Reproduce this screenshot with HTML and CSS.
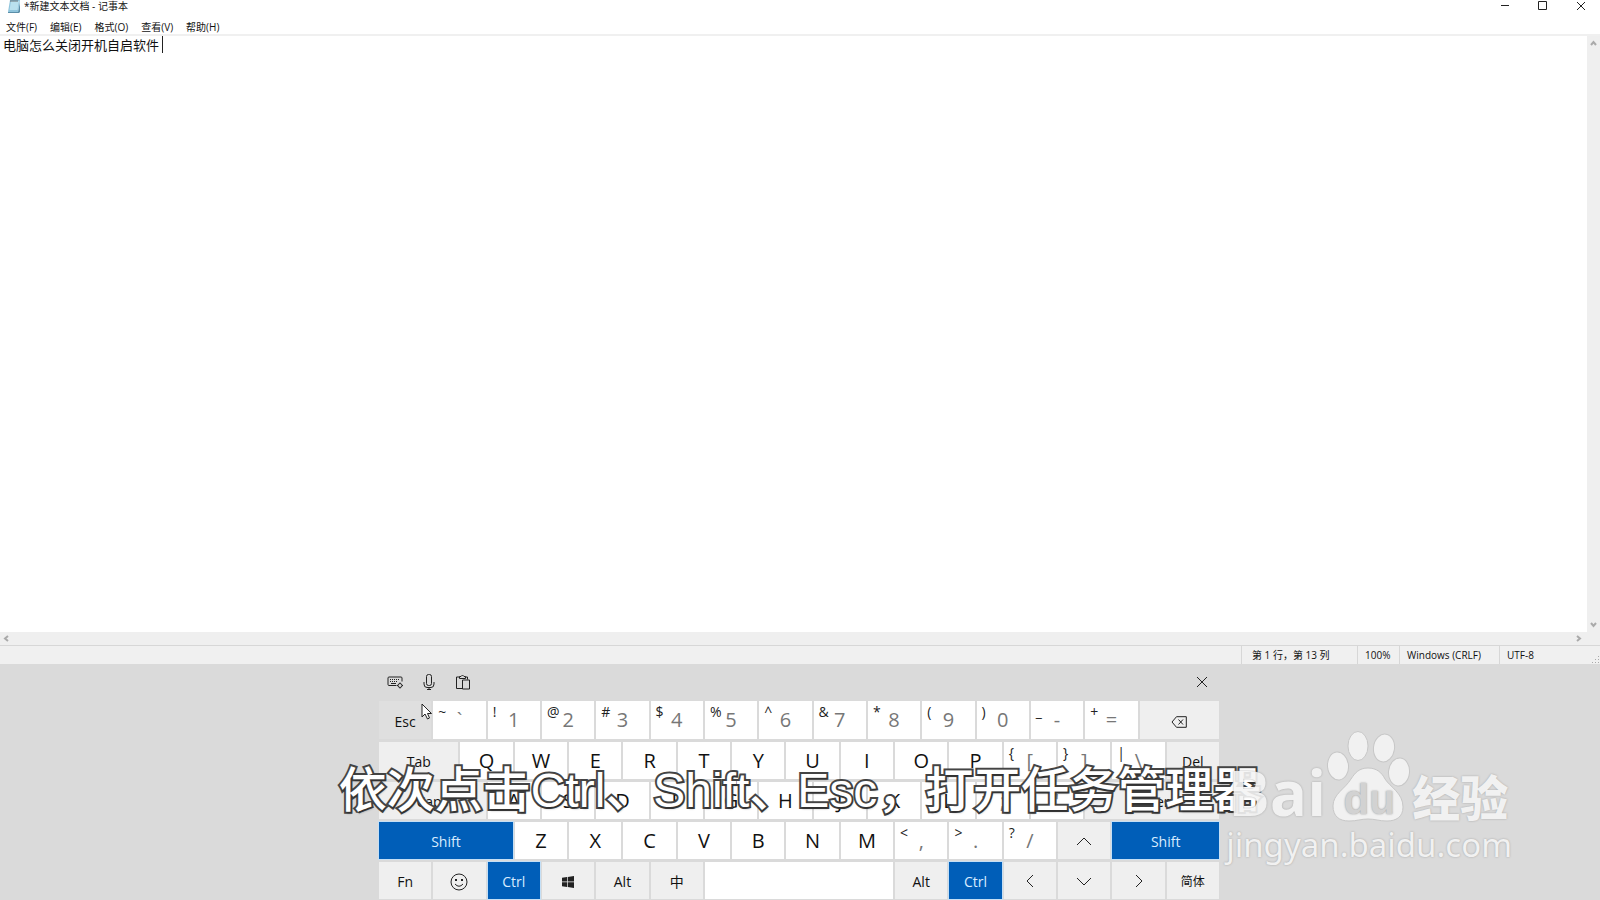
FILE: index.html
```html
<!DOCTYPE html>
<html lang="zh-CN">
<head>
  <meta charset="UTF-8" />
  <meta name="viewport" content="width=device-width, initial-scale=1" />
  <title>*新建文本文档 - 记事本</title>
  <link rel="stylesheet" href="styles.css">
</head>
<body>
  <div class="notepad">
    <header class="titlebar">
      <svg class="app-icon" width="14" height="14" viewBox="0 0 14 14">
        <path d="M3 0H13L11 12H1Z" fill="#8fc4dc" />
        <path d="M4 1H12L10.500 10H2.500Z" fill="#b9e0ee" />
        <path d="M1 12H11L13 2V12L12 13H1Z" fill="#5b8ea8" />
        <path d="M4 0v2M6 0v2M8 0v2M10 0v2" stroke="#555" stroke-width=".8" />
      </svg>
      <span class="title">*新建文本文档 - 记事本</span>
      <div class="win-buttons">
        <button aria-label="最小化"><svg width="10" height="10" viewBox="0 0 10 10"><path d="M1 5.500H9" /></svg></button>
        <button aria-label="最大化"><svg width="10" height="10" viewBox="0 0 10 10"><path d="M.5 1.500H8.500V9.500H.5Z" /></svg></button>
        <button aria-label="关闭"><svg width="10" height="10" viewBox="0 0 10 10"><path d="M1 2L9 10M9 2L1 10" /></svg></button>
      </div>
    </header>

    <nav class="menu">
      <button>文件(F)</button>
      <button>编辑(E)</button>
      <button>格式(O)</button>
      <button>查看(V)</button>
      <button>帮助(H)</button>
    </nav>

    <div class="editor">
      <div class="text-wrap">
        <textarea class="text" aria-label="文本编辑器" spellcheck="false" wrap="off">电脑怎么关闭开机自启软件</textarea>
        <span class="caret"></span>
      </div>
      <div class="scroll-v">
        <button aria-label="向上滚动"><svg width="7" height="7" viewBox="0 0 7 7"><path d="M1 5L3.500 2L6 5" /></svg></button>
        <button aria-label="向下滚动"><svg width="7" height="7" viewBox="0 0 7 7"><path d="M1 2L3.500 5L6 2" /></svg></button>
      </div>
    </div>
    <div class="scroll-h">
      <button aria-label="向左滚动"><svg width="7" height="7" viewBox="0 0 7 7"><path d="M5 1L2 3.500L5 6" /></svg></button>
      <button aria-label="向右滚动"><svg width="7" height="7" viewBox="0 0 7 7"><path d="M2 1L5 3.500L2 6" /></svg></button>
    </div>

    <footer class="status">
      <span class="cell position">第 1 行，第 13 列</span>
      <span class="cell zoom">100%</span>
      <span class="cell eol">Windows (CRLF)</span>
      <span class="cell encoding">UTF-8</span>
      <svg class="grip" width="8" height="8" viewBox="0 0 8 8"><path d="M6 0h1v1h-1zM3 3h1v1h-1zM6 3h1v1h-1zM0 6h1v1h-1zM3 6h1v1h-1zM6 6h1v1h-1z" /></svg>
    </footer>
  </div>

  <div class="touch-panel">
    <div class="keyboard">
      <div class="tools">
        <button aria-label="键盘设置">
          <svg width="16" height="16" viewBox="0 0 16 16"><path d="M9.500 11.500H2Q1 11.500 1 10.500V4Q1 3 2 3H14Q15 3 15 4V7.500M4 9.500H9" /><path d="M3 5.500H13M3 7.500H11" stroke-dasharray="1 1" /><circle cx="13" cy="11.500" r="2" /><path d="M13 8.500v1M13 13.500v1M10 11.500h1M15 11.500h1" /></svg>
        </button>
        <button aria-label="听写">
          <svg width="16" height="16" viewBox="0 0 16 16"><rect x="5.500" y=".5" width="5" height="11" rx="2" /><path d="M3 8V10Q3 13.500 6 13.500H10Q13 13.500 13 10V8M8 13.500V16M6 15.500h4" /></svg>
        </button>
        <button aria-label="剪贴板">
          <svg width="16" height="16" viewBox="0 0 16 16"><path d="M7 14.500H1.500V3H4.500M10.500 3H12.500V5.500M4.500 4.500V2.500H6Q7.500-.5 9 2.500H10.500V4.500Z" /><path d="M7.500 6H14.500V15H7.500Z" /></svg>
        </button>
        <button class="close" aria-label="关闭键盘">
          <svg width="14" height="14" viewBox="0 0 14 14"><path d="M2 2L12 12M12 2L2 12" /></svg>
        </button>
      </div>

      <div class="keys">
        <button class="key fn hover">Esc
          <svg class="pointer" width="12" height="18" viewBox="0 0 12 18"><path d="M1 1V14L4 11L6.500 16L8.500 15L6.500 10.500H10.500Z" /></svg>
        </button>
        <button class="key dual"><sup>~</sup>`</button>
        <button class="key dual"><sup>!</sup>1</button>
        <button class="key dual"><sup>@</sup>2</button>
        <button class="key dual"><sup>#</sup>3</button>
        <button class="key dual"><sup>$</sup>4</button>
        <button class="key dual"><sup>%</sup>5</button>
        <button class="key dual"><sup>^</sup>6</button>
        <button class="key dual"><sup>&amp;</sup>7</button>
        <button class="key dual"><sup>*</sup>8</button>
        <button class="key dual"><sup>(</sup>9</button>
        <button class="key dual"><sup>)</sup>0</button>
        <button class="key dual"><sup>_</sup>-</button>
        <button class="key dual"><sup>+</sup>=</button>
        <button class="key fn w3" aria-label="退格"><svg width="16" height="12" viewBox="0 0 16 12"><path d="M5.500 .7H15.300V11.300H5.500L1 6Z" /><path d="M7.500 3.500L12 8.500M12 3.500L7.500 8.500" /></svg></button>

        <button class="key fn w3">Tab</button>
        <button class="key">Q</button>
        <button class="key">W</button>
        <button class="key">E</button>
        <button class="key">R</button>
        <button class="key">T</button>
        <button class="key">Y</button>
        <button class="key">U</button>
        <button class="key">I</button>
        <button class="key">O</button>
        <button class="key">P</button>
        <button class="key dual"><sup>{</sup>[</button>
        <button class="key dual"><sup>}</sup>]</button>
        <button class="key dual"><sup>|</sup>\</button>
        <button class="key fn">Del</button>

        <button class="key fn w4">Caps</button>
        <button class="key">A</button>
        <button class="key">S</button>
        <button class="key">D</button>
        <button class="key">F</button>
        <button class="key">G</button>
        <button class="key">H</button>
        <button class="key">J</button>
        <button class="key">K</button>
        <button class="key">L</button>
        <button class="key dual"><sup>:</sup>;</button>
        <button class="key dual"><sup>"</sup>'</button>
        <button class="key fn w5">Enter</button>

        <button class="key fn w5 active">Shift</button>
        <button class="key">Z</button>
        <button class="key">X</button>
        <button class="key">C</button>
        <button class="key">V</button>
        <button class="key">B</button>
        <button class="key">N</button>
        <button class="key">M</button>
        <button class="key dual"><sup>&lt;</sup>,</button>
        <button class="key dual"><sup>&gt;</sup>.</button>
        <button class="key dual"><sup>?</sup>/</button>
        <button class="key fn" aria-label="上"><svg width="16" height="16" viewBox="0 0 16 16"><path d="M1 11L8 4L15 11" /></svg></button>
        <button class="key fn w4 active">Shift</button>

        <button class="key fn">Fn</button>
        <button class="key fn" aria-label="表情"><svg width="18" height="18" viewBox="0 0 18 18"><circle cx="9" cy="9" r="8" /><path d="M5 11Q9 15.500 13 11" /><path class="solid" d="M5 6h2v2h-2zM11 6h2v2h-2z" /></svg></button>
        <button class="key fn active">Ctrl</button>
        <button class="key fn" aria-label="Windows"><svg width="12" height="12" viewBox="0 0 12 12"><path class="solid" d="M0 1.700L5 1V5.600H0ZM5.700 .9L12 0V5.600H5.700ZM0 6.300H5V11L0 10.300ZM5.700 6.300H12V12L5.700 11.100Z" /></svg></button>
        <button class="key fn">Alt</button>
        <button class="key fn">中</button>
        <button class="key w7" aria-label="空格"></button>
        <button class="key fn">Alt</button>
        <button class="key fn active">Ctrl</button>
        <button class="key fn" aria-label="左"><svg width="16" height="16" viewBox="0 0 16 16"><path d="M11 1L5 7L11 13" /></svg></button>
        <button class="key fn" aria-label="下"><svg width="16" height="16" viewBox="0 0 16 16"><path d="M1 4L8 11L15 4" /></svg></button>
        <button class="key fn" aria-label="右"><svg width="16" height="16" viewBox="0 0 16 16"><path d="M5 1L11 7L5 13" /></svg></button>
        <button class="key fn lang">简体</button>
      </div>
    </div>
  </div>

  <p class="caption">依次点击Ctrl、Shift、Esc，打开任务管理器</p>

  <div class="watermark">
    <div class="brand">
      <span class="bai">Bai</span>
      <span class="paw">
        <svg width="86" height="94" viewBox="0 0 86 94">
          <ellipse cx="12" cy="37" rx="10.500" ry="14" transform="rotate(-6 12 37)" />
          <ellipse cx="32" cy="17" rx="10" ry="14.500" />
          <ellipse cx="58" cy="19" rx="10.500" ry="14" transform="rotate(8 58 19)" />
          <ellipse cx="73" cy="43" rx="10.500" ry="14" transform="rotate(6 73 43)" />
          <path d="M42 39C51 39 56 44 59 50C64 58 77 64 77 78C77 88 70 92 61 92C53 92 49 90 42 90C35 90 31 92 23 92C13 92 7 87 7 77C7 65 19 60 25 50C29 44 33 39 42 39Z" />
        </svg>
        <span class="du">du</span>
      </span>
      <span class="jingyan">经验</span>
    </div>
    <div class="site">jingyan.baidu.com</div>
  </div>
</body>
</html>
```
FILE: styles.css
```css
* {
  box-sizing: border-box;
  margin: 0;
  padding: 0;
}
body {
  position: relative;
  display: flex;
  flex-direction: column;
  height: 100vh;
  overflow: hidden;
  background: #fff;
  color: #111;
  font-family: "Open Sans", "Noto Sans CJK SC", sans-serif;
}
button {
  border: none;
  background: none;
  color: inherit;
  font: inherit;
}
svg {
  display: block;
  fill: none;
  stroke: #222;
}

/* notepad window */
.notepad {
  flex: 1;
  display: flex;
  flex-direction: column;
  min-height: 0;
}
.titlebar {
  display: flex;
  height: 18px;
  padding-left: 7px;
  font-size: 10px;
  line-height: 12px;
}
.app-icon {
  stroke: none;
}
.title {
  margin-left: 3px;
}
.win-buttons {
  display: flex;
  margin-left: auto;
}
.win-buttons button {
  display: flex;
  justify-content: center;
  width: 38px;
  height: 12px;
}
.menu {
  display: flex;
  gap: 13px;
  height: 18px;
  padding-left: 6px;
  border-bottom: 2px solid #f0f0f0;
  font-size: 10px;
  line-height: 18px;
}
.editor {
  flex: 1;
  display: flex;
  min-height: 0;
}
.text-wrap {
  flex: 1;
  position: relative;
}
.text {
  display: block;
  width: 100%;
  height: 100%;
  padding: 0 3px;
  border: none;
  outline: none;
  resize: none;
  overflow: hidden;
  background: #fff;
  color: #111;
  font-family: "Open Sans", "Noto Sans CJK SC", sans-serif;
  font-size: 13px;
  line-height: 18px;
}
.caret {
  position: absolute;
  left: 162px;
  top: 0;
  width: 1px;
  height: 17px;
  background: #222;
}
.scroll-v,
.scroll-h {
  display: flex;
  justify-content: space-between;
  background: #efefef;
}
.scroll-v {
  flex-direction: column;
  align-items: center;
  width: 13px;
  padding: 4px 0;
}
.scroll-h {
  align-items: center;
  height: 13px;
  padding: 0 18px 0 3px;
}
.scroll-v svg,
.scroll-h svg {
  stroke: #aaa;
  stroke-width: 2;
}
.status {
  display: flex;
  justify-content: flex-end;
  height: 19px;
  border-top: 1px solid #d7d7d7;
  background: #f0f0f0;
  font-size: 10px;
  line-height: 18px;
}
.cell {
  border-left: 1px solid #d7d7d7;
  white-space: nowrap;
}
.position {
  width: 116px;
  padding-left: 10px;
}
.zoom {
  width: 42px;
  padding-left: 7px;
}
.eol {
  width: 100px;
  padding-left: 7px;
}
.encoding {
  width: 93px;
  padding-left: 7px;
}
.grip {
  align-self: flex-end;
  fill: #aaa;
  stroke: none;
}

/* touch keyboard */
.touch-panel {
  padding: 0 2px 1px 0;
  background: #dadada;
}
.keyboard {
  width: 53%;
  max-width: 840px;
  margin: 0 auto;
}
.tools {
  display: flex;
  align-items: center;
  gap: 18px;
  height: 37px;
  padding: 0 10px 2px 8px;
}
.close {
  margin-left: auto;
}
.keys {
  display: grid;
  grid-template-columns: repeat(31, minmax(0, 1fr));
  grid-template-rows: 38px;
  grid-auto-rows: 37px;
  column-gap: 2px;
  row-gap: 3px;
}
.key {
  grid-column: span 2;
  position: relative;
  display: flex;
  align-items: center;
  justify-content: center;
  background: #fff;
  font-size: 20px;
  line-height: 36px;
}
.fn {
  padding-top: 3px;
  background: #efefef;
  font-size: 14px;
}
.hover {
  background: #dfdfdf;
}
.active {
  background: #005eb8;
  color: #d9ecff;
  outline: 1px solid #c5dff5;
}
.dual {
  color: #777;
}
.dual sup {
  position: absolute;
  left: 5px;
  top: 2px;
  color: #222;
  font-size: 14px;
  line-height: 18px;
}
.lang {
  font-size: 12px;
}
.solid {
  fill: #222;
  stroke: none;
}
.w3 {
  grid-column: span 3;
}
.w4 {
  grid-column: span 4;
}
.w5 {
  grid-column: span 5;
}
.w7 {
  grid-column: span 7;
}
.pointer {
  position: absolute;
  right: -2px;
  top: 2px;
  fill: #fff;
}

/* video subtitle */
.caption {
  position: absolute;
  left: 0;
  right: 0;
  bottom: 77px;
  color: #fff;
  font-family: "Liberation Sans", "Noto Sans CJK SC", sans-serif;
  font-size: 48px;
  font-weight: 500;
  line-height: 64px;
  text-align: center;
  white-space: nowrap;
  -webkit-text-stroke: 4px #444;
  paint-order: stroke fill;
  text-shadow: 1px 2px 2px rgba(0, 0, 0, 0.3);
}

/* site watermark */
.watermark {
  position: absolute;
  right: 88px;
  bottom: 33px;
  color: #f4f4f4;
  opacity: 0.9;
  text-shadow: 0 0 2px #999;
}
.brand {
  display: flex;
  align-items: flex-end;
  padding-left: 2px;
  font-weight: 700;
}
.bai {
  font-family: "Open Sans", sans-serif;
  font-size: 62px;
  line-height: 62px;
}
.paw {
  position: relative;
}
.paw svg {
  fill: #f4f4f4;
  stroke: #c6c6c6;
}
.du {
  position: absolute;
  left: 0;
  right: 0;
  bottom: 2px;
  color: #d2d2d2;
  font-family: "Liberation Sans", sans-serif;
  font-size: 42px;
  line-height: 42px;
  text-align: center;
  text-shadow: 0 0 2px #888;
}
.jingyan {
  font-family: "Noto Sans CJK SC", sans-serif;
  font-size: 48px;
  font-weight: 900;
  line-height: 56px;
}
.site {
  font-family: "Noto Sans", sans-serif;
  font-size: 33px;
  line-height: 44px;
}
```
